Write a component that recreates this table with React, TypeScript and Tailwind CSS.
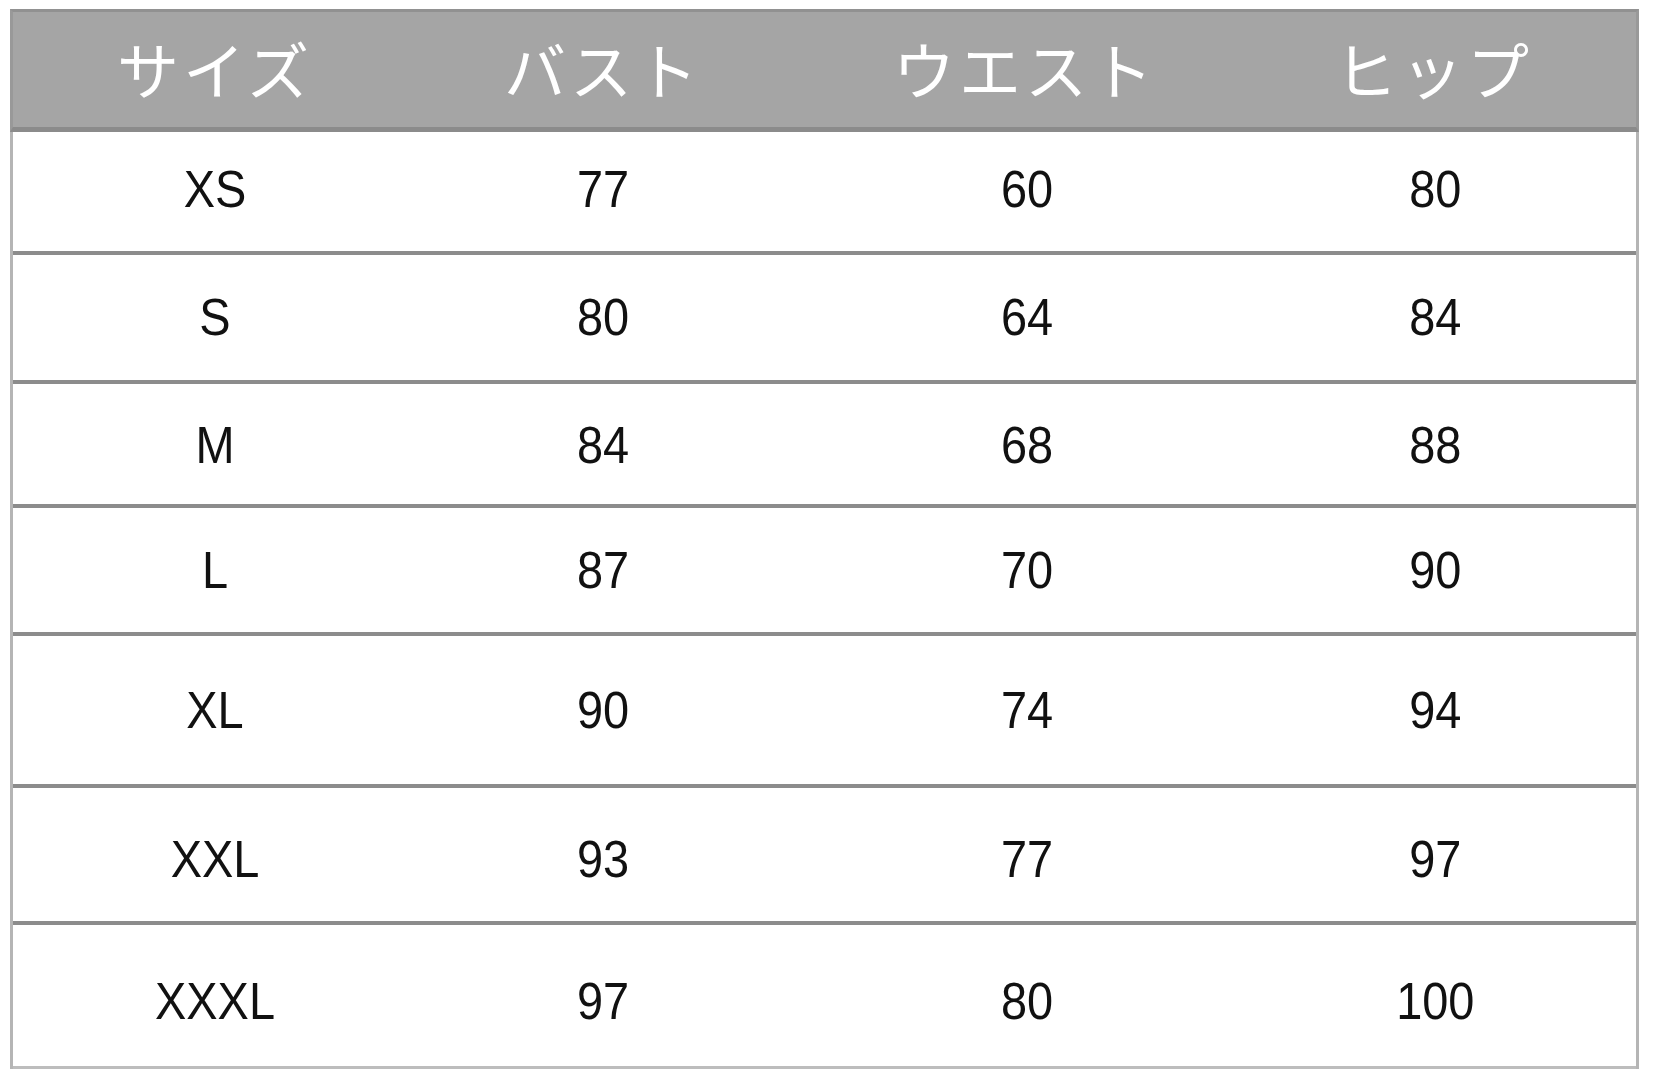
const headers = ['サイズ', 'バスト', 'ウエスト', 'ヒップ'];

const rows: { h: string; pad: string; cells: string[] }[] = [
  { h: 'h-[123px]', pad: 'pb-[4px]', cells: ['XS', '77', '60', '80'] },
  { h: 'h-[129px]', pad: '', cells: ['S', '80', '64', '84'] },
  { h: 'h-[124px]', pad: 'pt-[2px]', cells: ['M', '84', '68', '88'] },
  { h: 'h-[128px]', pad: '', cells: ['L', '87', '70', '90'] },
  { h: 'h-[152px]', pad: '', cells: ['XL', '90', '74', '94'] },
  { h: 'h-[137px]', pad: 'pt-[10px]', cells: ['XXL', '93', '77', '97'] },
  { h: 'h-[144px]', pad: 'pt-[12px]', cells: ['XXXL', '97', '80', '100'] },
];

const cols = 'grid grid-cols-[404px_372px_476px_371px]';

export default function App() {
  return (
    <div className="min-h-screen w-full bg-white pt-[9px] pl-[10px]">
      <div className="w-[1629px]">
        {/* header */}
        <div
          className={`${cols} h-[123px] items-center bg-[#a5a5a5] border-t-[3px] border-b-[5px] border-x-[3px] border-t-[#919191] border-b-[#8b8b8b] border-x-[#999999] text-white text-[62px] tracking-[4px] leading-none`}
          style={{ fontFamily: '"Noto Sans CJK JP", "Noto Sans", sans-serif' }}
        >
          {headers.map((t, i) => (
            <div
              key={t}
              className={`text-center pb-[4px] ${i === 2 ? 'pr-[4px]' : ''} ${i === 3 ? 'pr-[33px]' : ''}`}
            >
              {t}
            </div>
          ))}
        </div>

        {/* body */}
        <div
          className="border-x-[3px] border-[#b5b5b5] text-[51px] leading-none text-[#111111]"
          style={{ fontFamily: '"Liberation Sans", Arial, sans-serif' }}
        >
          {rows.map((r, ri) => (
            <div
              key={ri}
              className={`${cols} ${r.h} ${r.pad} items-center ${
                ri === rows.length - 1
                  ? 'border-b-[3px] border-[#bdbdbd]'
                  : 'border-b-4 border-[#8c8c8c]'
              }`}
            >
              {r.cells.map((c, ci) => (
                <div key={ci} className={`text-center scale-x-[0.92] ${ci === 3 ? 'pr-[33px]' : ''}`}>
                  {c}
                </div>
              ))}
            </div>
          ))}
        </div>
      </div>
    </div>
  );
}
